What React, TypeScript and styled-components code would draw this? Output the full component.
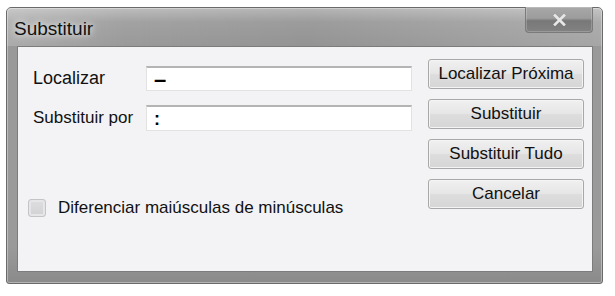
import React from "react";
import styled, { createGlobalStyle } from "styled-components";

const GlobalStyle = createGlobalStyle`
  html, body {
    margin: 0;
    padding: 0;
    background: #ffffff;
  }
  body {
    font-family: "Liberation Sans", Arial, sans-serif;
    -webkit-font-smoothing: antialiased;
  }
`;

const Page = styled.div`
  width: 615px;
  height: 296px;
  padding: 7px 0 0 6px;
  box-sizing: border-box;
`;

const Window = styled.div`
  width: 597px;
  height: 277px;
  box-sizing: border-box;
  display: flex;
  flex-direction: column;
  border: 1px solid #6a6a6a;
  border-radius: 5px 5px 3px 3px;
  background: linear-gradient(
    to bottom,
    #bdbdbd 0px,
    #a2a2a2 14px,
    #999999 38px,
    #9a9a9a 240px,
    #8a8a8a 100%
  );
  box-shadow: inset 0 0 0 1px rgba(255, 255, 255, 0.35);
`;

const TitleBar = styled.div`
  height: 38px;
  display: flex;
  justify-content: space-between;
  align-items: flex-start;
  background: linear-gradient(
    to right,
    rgba(255, 255, 255, 0.18) 0px,
    rgba(255, 255, 255, 0) 120px,
    rgba(0, 0, 0, 0.04) 300px,
    rgba(255, 255, 255, 0.12) 100%
  );
`;

const Title = styled.div`
  margin: 10px 0 0 7px;
  padding: 0 10px 0 0;
  font-size: 19px;
  line-height: 22px;
  color: #111111;
  text-shadow: 0 0 6px rgba(255, 255, 255, 0.85), 0 0 12px rgba(255, 255, 255, 0.6);
`;

const CloseButton = styled.div`
  width: 68px;
  height: 26px;
  margin: -1px 9px 0 0;
  box-sizing: border-box;
  display: flex;
  align-items: center;
  justify-content: center;
  border: 1px solid #7a7a7a;
  border-top: none;
  border-radius: 0 0 4px 4px;
  background: linear-gradient(
    to bottom,
    #a8a8a8 0%,
    #9c9c9c 45%,
    #787878 55%,
    #828282 100%
  );
  box-shadow: inset 0 0 0 1px rgba(255, 255, 255, 0.2);
`;

const ClientArea = styled.div`
  flex: 1;
  margin: 0 9px 11px 10px;
  display: flex;
  background: #f3f3f5;
  border: 1px solid #7c7c7c;
`;

const FormColumn = styled.div`
  width: 395px;
  padding: 19px 0 0 10px;
  box-sizing: border-box;
  display: flex;
  flex-direction: column;
`;

const FieldRow = styled.div<{ $gap: number }>`
  display: flex;
  align-items: center;
  padding-left: 5px;
  margin-top: ${(p) => p.$gap}px;
`;

const Label = styled.label<{ $size: number }>`
  width: 113px;
  flex-shrink: 0;
  font-size: ${(p) => p.$size}px;
  color: #111111;
`;

const TextBox = styled.div<{ $height: number; $size: number }>`
  width: 266px;
  height: ${(p) => p.$height}px;
  box-sizing: border-box;
  display: flex;
  align-items: center;
  padding: 2px 0 0 7px;
  background: #ffffff;
  border: 1px solid #e2e2e2;
  border-top: 2px solid #b4b4b4;
  font-size: ${(p) => p.$size}px;
  font-weight: bold;
  color: #000000;
`;

const CheckRow = styled.label`
  display: flex;
  align-items: center;
  gap: 12px;
  margin-top: 67px;
  font-size: 17px;
  color: #111111;
`;

const CheckBox = styled.span`
  width: 18px;
  height: 18px;
  box-sizing: border-box;
  border: 1px solid #c4c4c6;
  border-radius: 3px;
  background: linear-gradient(to bottom, #dedee0, #d2d2d4);
  box-shadow: inset 0 0 0 2px #e6e6e8;
`;

const ButtonColumn = styled.div`
  padding-top: 12px;
  margin-left: 15px;
  display: flex;
  flex-direction: column;
  gap: 10px;
`;

const Button = styled.div`
  width: 156px;
  height: 30px;
  box-sizing: border-box;
  display: flex;
  align-items: center;
  justify-content: center;
  border: 1px solid #a8a8a8;
  border-radius: 3px;
  background: linear-gradient(to bottom, #f0f0f0 0%, #e6e6e6 48%, #dddddd 52%, #d6d6d6 100%);
  box-shadow: inset 0 0 0 1px #f4f4f4;
  font-size: 17px;
  color: #111111;
`;

const CloseIcon = () => (
  <svg width="13" height="12" viewBox="0 0 13 12">
    <path
      d="M2 1.5 L11 10.5 M11 1.5 L2 10.5"
      stroke="#e8e8e8"
      strokeWidth="2.6"
      strokeLinecap="square"
    />
  </svg>
);

const buttons = ["Localizar Próxima", "Substituir", "Substituir Tudo", "Cancelar"];

export default function App() {
  return (
    <Page>
      <GlobalStyle />
      <Window>
        <TitleBar>
          <Title>Substituir</Title>
          <CloseButton>
            <CloseIcon />
          </CloseButton>
        </TitleBar>
        <ClientArea>
          <FormColumn>
            <FieldRow $gap={0}>
              <Label $size={18}>Localizar</Label>
              <TextBox $height={25} $size={22}>
                –
              </TextBox>
            </FieldRow>
            <FieldRow $gap={14}>
              <Label $size={17}>Substituir por</Label>
              <TextBox $height={26} $size={18}>
                :
              </TextBox>
            </FieldRow>
            <CheckRow>
              <CheckBox />
              Diferenciar maiúsculas de minúsculas
            </CheckRow>
          </FormColumn>
          <ButtonColumn>
            {buttons.map((b) => (
              <Button key={b}>{b}</Button>
            ))}
          </ButtonColumn>
        </ClientArea>
      </Window>
    </Page>
  );
}
